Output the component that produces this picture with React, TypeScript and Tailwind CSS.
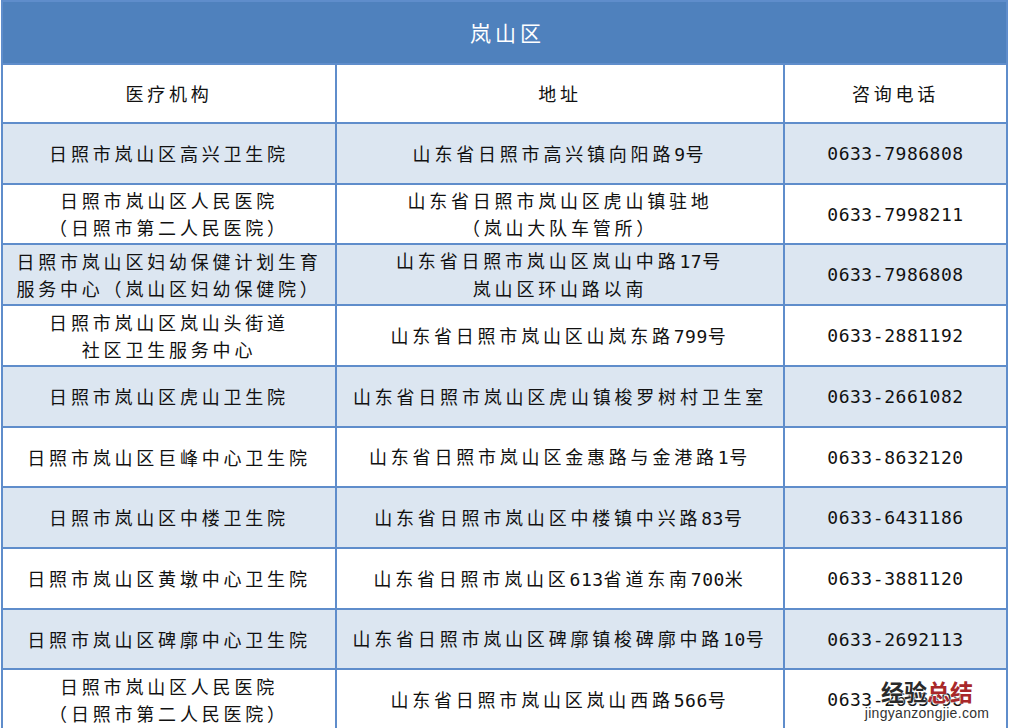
import React from "react";

type Row = { name: string[]; addr: string[]; tel: string; tall: boolean };

const rows: Row[] = [
  { name: ["日照市岚山区高兴卫生院"], addr: ["山东省日照市高兴镇向阳路9号"], tel: "0633-7986808", tall: true },
  { name: ["日照市岚山区人民医院", "（日照市第二人民医院）"], addr: ["山东省日照市岚山区虎山镇驻地", "（岚山大队车管所）"], tel: "0633-7998211", tall: false },
  { name: ["日照市岚山区妇幼保健计划生育", "服务中心（岚山区妇幼保健院）"], addr: ["山东省日照市岚山区岚山中路17号", "岚山区环山路以南"], tel: "0633-7986808", tall: true },
  { name: ["日照市岚山区岚山头街道", "社区卫生服务中心"], addr: ["山东省日照市岚山区山岚东路799号"], tel: "0633-2881192", tall: true },
  { name: ["日照市岚山区虎山卫生院"], addr: ["山东省日照市岚山区虎山镇梭罗树村卫生室"], tel: "0633-2661082", tall: true },
  { name: ["日照市岚山区巨峰中心卫生院"], addr: ["山东省日照市岚山区金惠路与金港路1号"], tel: "0633-8632120", tall: false },
  { name: ["日照市岚山区中楼卫生院"], addr: ["山东省日照市岚山区中楼镇中兴路83号"], tel: "0633-6431186", tall: true },
  { name: ["日照市岚山区黄墩中心卫生院"], addr: ["山东省日照市岚山区613省道东南700米"], tel: "0633-3881120", tall: true },
  { name: ["日照市岚山区碑廓中心卫生院"], addr: ["山东省日照市岚山区碑廓镇梭碑廓中路10号"], tel: "0633-2692113", tall: false },
  { name: ["日照市岚山区人民医院", "（日照市第二人民医院）"], addr: ["山东省日照市岚山区岚山西路566号"], tel: "0633-2685898", tall: true },
];

// digits go in a narrow mono run, CJK keeps wide tracking
const Mixed = ({ text }: { text: string }) => (
  <>
    {text.split(/([0-9]+)/).map((part, i) =>
      /^[0-9]+$/.test(part) ? (
        <span key={i} className="font-['DejaVu_Sans_Mono',monospace] tracking-[0.5px]">
          {part}
        </span>
      ) : (
        <span key={i}>{part}</span>
      )
    )}
  </>
);

const Cell = ({ lines, className }: { lines: string[]; className: string }) => (
  <div className={`flex flex-col items-center justify-center text-center leading-[27px] ${className}`}>
    {lines.map((l) => (
      <div key={l} className="whitespace-nowrap">
        <Mixed text={l} />
      </div>
    ))}
  </div>
);

export default function App() {
  return (
    <div className="relative h-[728px] w-[1010px] overflow-hidden bg-white font-['Noto_Sans_CJK_SC',sans-serif] text-[18px] tracking-[3.8px] text-[#111]">
      <div className="ml-px w-[1007px] border-x-2 border-t-2 border-[#5f8dcb]">
        {/* title */}
        <div className="flex h-[63px] items-center justify-center border-b-2 border-[#5f8dcb] bg-[#4f81bd] pl-[6px] text-[21px] tracking-[4px] text-white">
          岚山区
        </div>

        {/* column heads */}
        <div className="flex h-[59px] border-b-2 border-[#5f8dcb]">
          <Cell lines={["医疗机构"]} className="w-[334px] border-r-2 border-[#5f8dcb]" />
          <Cell lines={["地址"]} className="w-[448px] border-r-2 border-[#5f8dcb]" />
          <Cell lines={["咨询电话"]} className="flex-1" />
        </div>

        {rows.map((r, i) => (
          <div
            key={i}
            className={`flex border-b-2 border-[#5f8dcb] ${r.tall ? "h-[61px]" : "h-[60px]"} ${
              i % 2 === 0 ? "bg-[#dce6f1]" : "bg-white"
            }`}
          >
            <Cell lines={r.name} className="w-[334px] border-r-2 border-[#5f8dcb]" />
            <Cell lines={r.addr} className="w-[448px] border-r-2 border-[#5f8dcb]" />
            <Cell lines={[r.tel]} className="flex-1 font-['DejaVu_Sans_Mono',monospace] tracking-[0.7px]" />
          </div>
        ))}
      </div>

      {/* watermark */}
      <div className="absolute left-[860px] top-[679px] flex w-[134px] flex-col items-center tracking-normal">
        <div className="text-[23px] font-bold leading-[24px] [text-shadow:0_0_2px_#fff,0_0_2px_#fff]">
          <span className="text-[#2a2a2a]">经验</span>
          <span className="text-[#a8282a]">总结</span>
        </div>
        <div className="mt-[2px] font-['Liberation_Sans',sans-serif] text-[14px] leading-[16px] tracking-[0.3px] text-[#333] [text-shadow:0_0_2px_#fff,0_0_2px_#fff]">
          jingyanzongjie.com
        </div>
      </div>
    </div>
  );
}
